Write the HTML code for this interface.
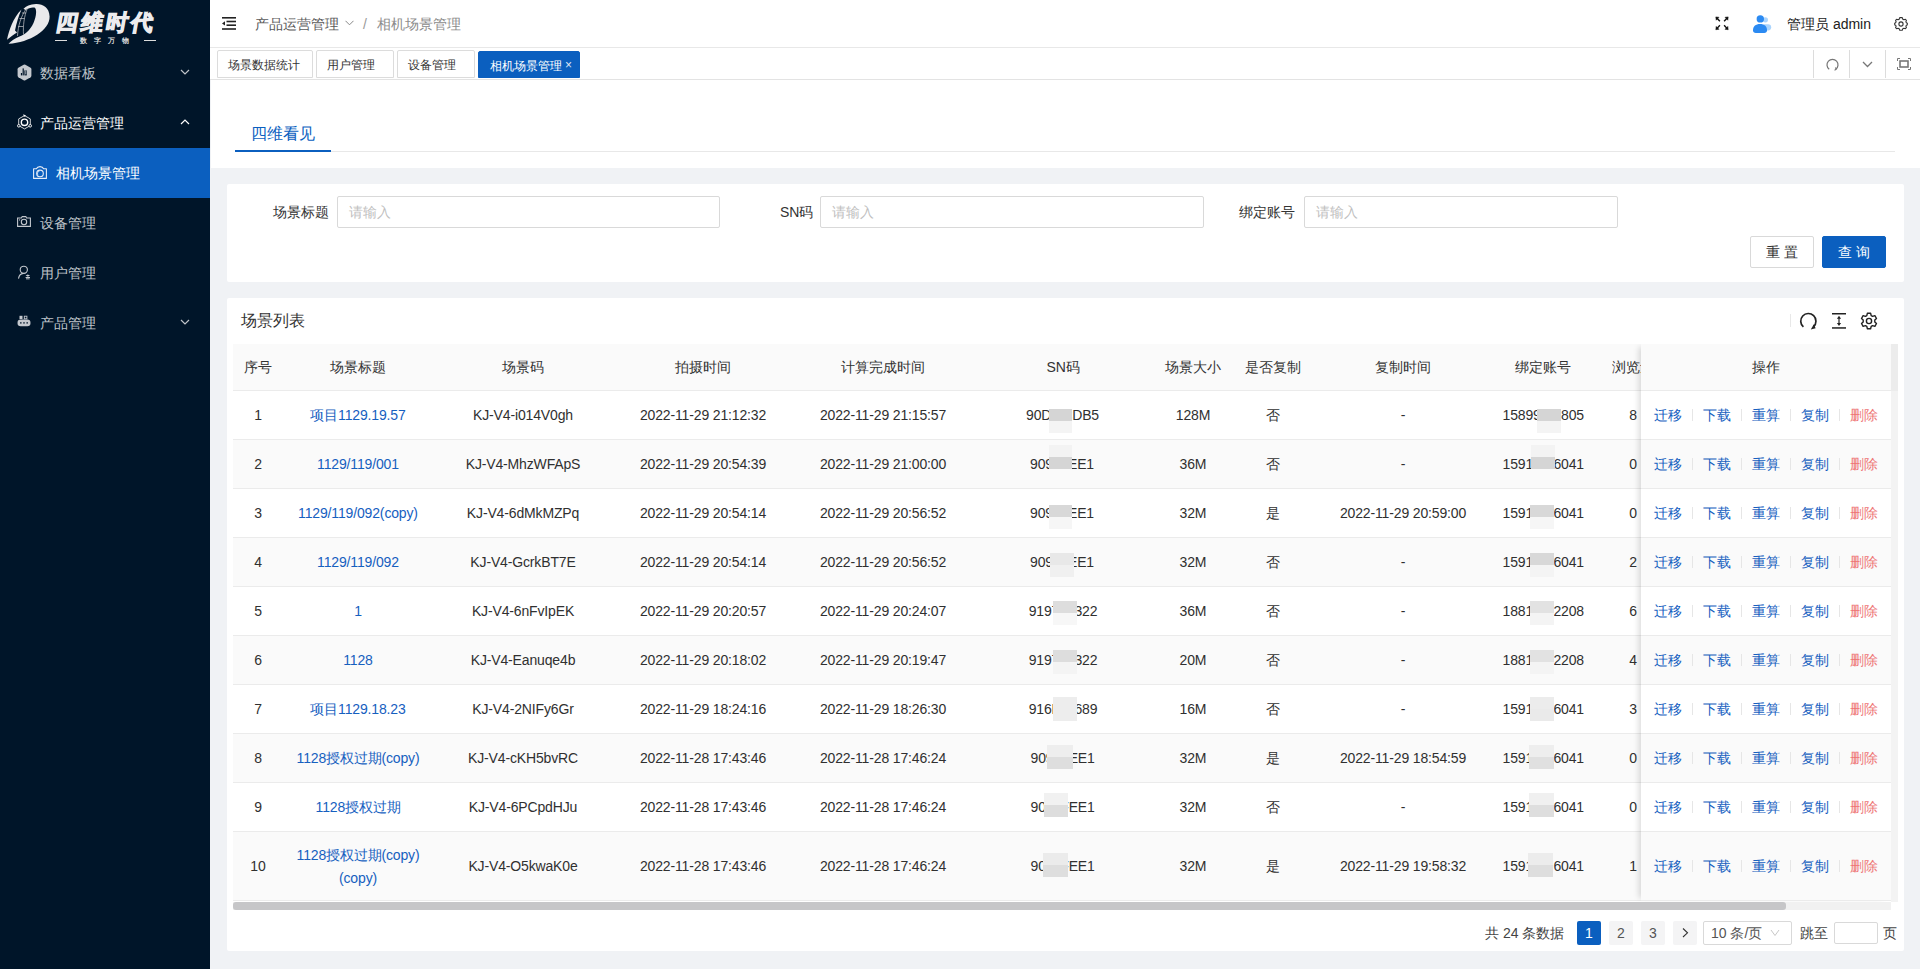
<!DOCTYPE html>
<html><head><meta charset="utf-8">
<style>
*{box-sizing:border-box;margin:0;padding:0}
html,body{width:1920px;height:969px;overflow:hidden;background:#f0f2f5;font-family:"Liberation Sans",sans-serif;color:#333;font-size:14px}
.abs{position:absolute}
.sider{position:absolute;left:0;top:0;width:210px;height:969px;background:#001529}
.menu{position:absolute;left:0;width:210px;height:50px;color:#bfc4ca;font-size:14px}
.menu .ic{position:absolute;left:17px;top:16px;width:15px;height:17px}
.menu .tx{position:absolute;left:40px;top:0;line-height:50px;white-space:nowrap}
.menu .ar{position:absolute;left:180px;top:21px;width:10px;height:6px}
.header{position:absolute;left:210px;top:0;width:1710px;height:48px;background:#fff;border-bottom:1px solid #e8e8e8}
.tabbar{position:absolute;left:210px;top:48px;width:1710px;height:32px;background:#fff;border-bottom:1px solid #e3e3e3}
.tab{position:absolute;top:2px;height:28px;border:1px solid #dcdcdc;border-radius:2px 2px 0 0;font-size:12px;line-height:28px;color:#333;text-align:left;padding-left:10px;white-space:nowrap;background:#fff}
.tab.on{background:#0b5fbf;border-color:#0b5fbf;color:#fff;top:3px;height:27px;line-height:27px;padding-top:1px}
.sep{position:absolute;top:2px;width:1px;height:28px;background:#dcdcdc}
.card{position:absolute;background:#fff;border-radius:2px}
.lbl{position:absolute;top:196px;line-height:32px;font-size:14px;color:#333;white-space:nowrap}
.inp{position:absolute;top:196px;height:32px;border:1px solid #d9d9d9;border-radius:2px;background:#fff;color:#bfbfbf;font-size:14px;line-height:30px;padding-left:11px}
.btn{position:absolute;top:236px;height:32px;border-radius:2px;font-size:14px;line-height:30px;text-align:center;letter-spacing:4px;text-indent:4px}

.tbl{position:absolute;left:233px;top:344px;width:1665px;height:568px;overflow:hidden;font-size:14px;color:#303030}
.tbl .c{position:absolute;top:0;text-align:center;white-space:nowrap;letter-spacing:-0.15px}
.th{position:absolute;left:0;width:1658px;background:#fafafa;border-bottom:1px solid #ebebeb;color:#333}
.tr{position:absolute;left:0;width:1658px;background:#fff;border-bottom:1px solid #ebebeb}
.ev{background:#fafafa}
.lk{color:#1660bf}
.mk{position:absolute;height:24px;z-index:1}
.fx{position:absolute;left:1408px;top:0;width:250px;height:557px;box-shadow:-5px 0 6px -3px rgba(0,0,0,.15)}
.fxh{position:absolute;left:0;top:0;width:250px;height:47px;background:#fafafa;border-bottom:1px solid #ebebeb;line-height:46px;text-align:center}
.fr{position:absolute;left:0;width:250px;background:#fff;border-bottom:1px solid #ebebeb;text-align:center;white-space:nowrap}
.fr.ev{background:#fafafa}
.fr a{color:#1660bf;text-decoration:none}
.fr a.del{color:#ee7575}
.fr b{display:inline-block;width:1px;height:12px;background:#e6e6e6;margin:0 10px;vertical-align:-1px}
.gut{position:absolute;left:1658px;width:7px}
.hs{position:absolute;left:0;top:558px;width:1658px;height:8px;background:#f1f1f1}
.hs i{position:absolute;left:0;top:0;width:1553px;height:8px;background:#c6c6c8;border-radius:3px}
.pg{position:absolute;top:921px;height:24px;width:24px;background:#f4f4f5;border-radius:2px;text-align:center;line-height:24px;font-size:14px;color:#555}
</style></head><body>

<div class="sider">
  <!-- logo -->
  <svg class="abs" style="left:0;top:0" width="60" height="48" viewBox="0 0 60 48">
    <path d="M8.5 43.8 C30 42.5 50 30 49.6 16.5 C49.3 7.5 43 3.8 36 4 C30 4.2 26 6.5 23.5 8.8 L25.5 10 C28.5 8 32 7 34.5 7.6 C37 9 36.6 16 33.5 23 C30 30.5 24.5 35 19.5 36.5 C15 38.2 11 41 8.5 43.8 Z" fill="#e9e9eb"/>
    <path d="M7 39.8 C9 30 13 18 21.5 9.5 C18.5 16 16.5 23 15 30.5 L17 32.5 C14 34.5 10.5 37 7 39.8 Z" fill="#e9e9eb"/>
    <path d="M17.5 36 C18 26 21 16 26.5 8.5 M23.5 34.5 C23 26 24 16 27.5 8.2" stroke="#c9c9cc" stroke-width="0.7" fill="none"/>
    <path d="M18.2 26.5 H23 M19.5 18.5 H24.5 M22 13 H26" stroke="#c9c9cc" stroke-width="0.7"/>
  </svg>
  <div class="abs" style="left:56px;top:8px;font-size:22px;line-height:30px;font-weight:900;color:#ececee;letter-spacing:3px;transform:skewX(-10deg);-webkit-text-stroke:1.2px #ececee;white-space:nowrap">四维时代</div>
  <div class="abs" style="left:55px;top:40px;width:12px;height:1px;background:#ddd"></div>
  <div class="abs" style="left:144px;top:40px;width:12px;height:1px;background:#ddd"></div>
  <div class="abs" style="left:80px;top:36px;font-size:7px;line-height:9px;color:#ddd;letter-spacing:7px;font-weight:bold;white-space:nowrap">数字万物</div>

  <div class="menu" style="top:48px"><svg class="ic" viewBox="0 0 15 17"><path d="M6.6 0.8 Q7.5 0.3 8.4 0.8 L13.6 3.8 Q14.4 4.3 14.4 5.2 V11.8 Q14.4 12.7 13.6 13.2 L8.4 16.2 Q7.5 16.7 6.6 16.2 L1.4 13.2 Q0.6 12.7 0.6 11.8 V5.2 Q0.6 4.3 1.4 3.8 Z" fill="#c4c8ce"/><rect x="3.9" y="9" width="1.2" height="2.4" fill="#001529"/><rect x="5.6" y="4.4" width="1.2" height="7" fill="#001529"/><rect x="7.4" y="6.4" width="2.4" height="5" fill="#001529"/><rect x="8.4" y="6.4" width="0.8" height="4" fill="#c4c8ce"/></svg><span class="tx">数据看板</span><svg class="ar" viewBox="0 0 10 6"><path d="M1 1 L5 5 L9 1" stroke="#bfc4ca" stroke-width="1.2" fill="none"/></svg></div>
  <div class="menu" style="top:98px;color:#fff"><svg class="ic" viewBox="0 0 15 17"><path d="M7.5 1.6 L13.3 4.9 V11.6 L7.5 14.9 L1.7 11.6 V4.9 Z" stroke="#e6e6e6" stroke-width="0.9" fill="none"/><circle cx="7.5" cy="8.3" r="3.2" stroke="#fff" stroke-width="1.4" fill="none"/><circle cx="1.8" cy="11.8" r="1.3" stroke="#fff" stroke-width="0.9" fill="#001529"/><circle cx="13.2" cy="11.8" r="1.3" stroke="#fff" stroke-width="0.9" fill="#001529"/><path d="M6.2 0.3 L9 1.6 L7 3 Z" fill="#fff"/></svg><span class="tx">产品运营管理</span><svg class="ar" viewBox="0 0 10 6"><path d="M1 5 L5 1 L9 5" stroke="#fff" stroke-width="1.2" fill="none"/></svg></div>
  <div class="menu" style="top:148px;background:#0b5fbf;color:#fff"><svg class="ic" style="left:33px;top:18px;width:14px;height:13px" viewBox="0 0 14 13"><path d="M0.6 2.8 H3.4 Q4.3 0.6 7 0.6 Q9.7 0.6 10.6 2.8 H13.4 V12.4 H0.6 Z" stroke="#e8eef8" stroke-width="1.1" fill="none" stroke-linejoin="round"/><circle cx="7" cy="7.4" r="3.3" stroke="#e8eef8" stroke-width="1.1" fill="none"/><path d="M5.2 9.2 A2.2 2.2 0 0 1 6.4 5.3" stroke="#e8eef8" stroke-width="0.8" fill="none"/></svg><span class="tx" style="left:56px">相机场景管理</span></div>
  <div class="menu" style="top:198px"><svg class="ic" style="top:18px;width:14px;height:11px" viewBox="0 0 14 11"><path d="M0.6 2 H4.4 L5.2 0.6 H8.8 L9.6 2 H13.4 V10.4 H0.6 Z" stroke="#c4c8ce" stroke-width="1.1" fill="none"/><circle cx="7" cy="6" r="2.7" stroke="#c4c8ce" stroke-width="1.1" fill="none"/><circle cx="2.6" cy="3.9" r="0.6" fill="#c4c8ce"/></svg><span class="tx">设备管理</span></div>
  <div class="menu" style="top:248px"><svg class="ic" style="left:18px;top:17px;width:13px;height:15px" viewBox="0 0 13 15"><circle cx="5.8" cy="4.8" r="3.6" stroke="#c4c8ce" stroke-width="1.1" fill="none"/><path d="M0.5 13.6 C1 10.6 3.2 8.6 5.4 8.4" stroke="#c4c8ce" stroke-width="1.1" fill="none"/><path d="M9.8 9.4 L12 10.6 L9.8 11.8 L7.6 10.6 Z" fill="#c4c8ce"/><rect x="7.6" y="12" width="4.4" height="1" fill="#c4c8ce"/><rect x="8" y="13.4" width="3.6" height="0.9" fill="#c4c8ce"/></svg><span class="tx">用户管理</span></div>
  <div class="menu" style="top:298px"><svg class="ic" style="left:17px;top:17px;width:14px;height:12px" viewBox="0 0 14 12"><rect x="2.5" y="0.8" width="3" height="3.2" fill="#c4c8ce"/><rect x="7.3" y="1.2" width="2.6" height="2.6" stroke="#c4c8ce" stroke-width="0.9" fill="none"/><rect x="0.5" y="4.6" width="13" height="6.6" rx="3.2" fill="#c4c8ce"/><rect x="3" y="7.3" width="1.6" height="1.2" fill="#001529"/><rect x="6.2" y="7.3" width="1.6" height="1.2" fill="#001529"/><rect x="9.4" y="7.3" width="1.6" height="1.2" fill="#001529"/></svg><span class="tx">产品管理</span><svg class="ar" viewBox="0 0 10 6"><path d="M1 1 L5 5 L9 1" stroke="#bfc4ca" stroke-width="1.2" fill="none"/></svg></div>
</div>

<div class="header">
  <svg class="abs" style="left:12px;top:17px" width="15" height="13" viewBox="0 0 15 13"><rect x="0" y="0" width="14" height="1.6" fill="#222"/><rect x="4.5" y="3.7" width="9.5" height="1.6" fill="#222"/><rect x="4.5" y="7.4" width="9.5" height="1.6" fill="#222"/><rect x="0" y="11.2" width="14" height="1.6" fill="#222"/><path d="M0 6.4 L3 4.2 V8.6 Z" fill="#222"/></svg>
  <div class="abs" style="left:45px;top:0;line-height:49px;font-size:14px;color:#595959;white-space:nowrap">产品运营管理</div>
  <svg class="abs" style="left:135px;top:20px" width="9" height="6" viewBox="0 0 9 6"><path d="M0.5 0.8 L4.5 4.8 L8.5 0.8" stroke="#888" stroke-width="1" fill="none"/></svg>
  <div class="abs" style="left:153px;top:0;line-height:49px;font-size:14px;color:#999">/</div>
  <div class="abs" style="left:167px;top:0;line-height:49px;font-size:14px;color:#8c8c8c;white-space:nowrap">相机场景管理</div>

  <svg class="abs" style="left:1504px;top:15px" width="16" height="16" viewBox="0 0 16 16" fill="#111" stroke="#111" stroke-width="1.4"><path d="M2.8 3 L5.9 6.3 M13.2 3 L10.1 6.3 M2.8 13.6 L5.9 10.2 M13.2 13.6 L10.1 10.2"/><path d="M1.8 1.9 L5 2.3 L2.2 5.2 Z M14.2 1.9 L11 2.3 L13.8 5.2 Z M1.8 14.7 L5 14.3 L2.2 11.4 Z M14.2 14.7 L11 14.3 L13.8 11.4 Z" stroke-width="0.5"/></svg>
  <svg class="abs" style="left:1542px;top:14px" width="20" height="20" viewBox="0 0 20 20"><rect x="9" y="10.2" width="10.2" height="6.2" rx="3.1" fill="#aad4fd"/><circle cx="13.4" cy="5.8" r="2.6" fill="#aad4fd"/><circle cx="8.3" cy="4.9" r="3.7" fill="#2b8af2"/><path d="M1 16.2 C1 12.2 3.8 10 8 10 C12.2 10 15 12.2 15 16.2 C15 18 14 19 12.2 19 H3.8 C2 19 1 18 1 16.2 Z" fill="#2b8af2"/></svg>
  <div class="abs" style="left:1577px;top:0;line-height:49px;font-size:14px;color:#222;white-space:nowrap">管理员 admin</div>
  <svg class="abs" style="left:1684px;top:17px" width="14" height="14" viewBox="0 0 16 16"><path d="M8 1.2 L9.6 1.6 L10 3.3 L11.4 4 L13 3.4 L14.2 4.6 L13.6 6.2 L14.3 7.6 L15.9 8 L15.9 9.6 L14.3 10 L13.6 11.4 L14.2 13 L13 14.2 L11.4 13.6 L10 14.3 L9.6 15.9 L6.4 15.9 L6 14.3 L4.6 13.6 L3 14.2 L1.8 13 L2.4 11.4 L1.7 10 L0.1 9.6 L0.1 8 L1.7 7.6 L2.4 6.2 L1.8 4.6 L3 3.4 L4.6 4 L6 3.3 L6.4 1.6 Z" transform="translate(0,-0.8)" stroke="#333" stroke-width="1.25" fill="none" stroke-linejoin="round"/><circle cx="8" cy="8" r="2.4" stroke="#333" stroke-width="1.25" fill="none"/></svg>
</div>

<div class="tabbar">
  <div class="tab" style="left:7px;width:96px">场景数据统计</div>
  <div class="tab" style="left:106px;width:78px">用户管理</div>
  <div class="tab" style="left:187px;width:78px">设备管理</div>
  <div class="tab on" style="left:268px;width:102px;padding-left:11px">相机场景管理<span class="abs" style="left:86px;top:0;font-size:12px;color:#dfe8f5">×</span></div>
  <div class="sep" style="left:1603px"></div>
  <div class="sep" style="left:1639px"></div>
  <div class="sep" style="left:1675px"></div>
  <svg class="abs" style="left:1616px;top:10px" width="13" height="13" viewBox="0 0 13 13"><path d="M3.2 11.3 A5.5 5.5 0 1 1 9.8 11.3" stroke="#777" stroke-width="1.2" fill="none"/><path d="M8.6 12.4 L10.2 11 L9.4 9.4" stroke="#777" stroke-width="1.1" fill="none"/></svg>
  <svg class="abs" style="left:1652px;top:13px" width="11" height="7" viewBox="0 0 11 7"><path d="M1 1 L5.5 5.5 L10 1" stroke="#777" stroke-width="1.3" fill="none"/></svg>
  <svg class="abs" style="left:1687px;top:10px" width="14" height="12" viewBox="0 0 14 12" stroke="#777" fill="none"><path d="M0.5 3 V0.5 H3 M11 0.5 H13.5 V3 M13.5 9 V11.5 H11 M3 11.5 H0.5 V9" stroke-width="1"/><rect x="3" y="3" width="8" height="6" stroke-width="1.6"/></svg>
</div>

<!-- top white area -->
<div class="abs" style="left:211px;top:80px;width:1709px;height:88px;background:#fff"></div>
<div class="abs" style="left:251px;top:121px;font-size:16px;line-height:26px;color:#0b5fbf">四维看见</div>
<div class="abs" style="left:235px;top:151px;width:1660px;height:1px;background:#e8e8e8"></div>
<div class="abs" style="left:235px;top:150px;width:96px;height:2px;background:#0b5fbf"></div>

<!-- search card -->
<div class="card" style="left:227px;top:184px;width:1677px;height:98px"></div>
<div class="lbl" style="left:273px">场景标题</div>
<div class="inp" style="left:337px;width:383px">请输入</div>
<div class="lbl" style="left:780px">SN码</div>
<div class="inp" style="left:820px;width:384px">请输入</div>
<div class="lbl" style="left:1239px">绑定账号</div>
<div class="inp" style="left:1304px;width:314px">请输入</div>
<div class="btn" style="left:1750px;width:64px;border:1px solid #d9d9d9;background:#fff;color:#333">重置</div>
<div class="btn" style="left:1822px;width:64px;border:1px solid #0b5fbf;background:#0b5fbf;color:#fff">查询</div>

<!-- table card -->
<div class="card" style="left:227px;top:298px;width:1677px;height:653px"></div>
<div class="abs" style="left:241px;top:309px;font-size:16px;line-height:24px;color:#333">场景列表</div>

<div class="tbl">
<div class="th" style="top:0;height:47px">
<div class="c" style="left:0px;width:50px;line-height:46px">序号</div>
<div class="c" style="left:50px;width:150px;line-height:46px">场景标题</div>
<div class="c" style="left:200px;width:180px;line-height:46px">场景码</div>
<div class="c" style="left:380px;width:180px;line-height:46px">拍摄时间</div>
<div class="c" style="left:560px;width:180px;line-height:46px">计算完成时间</div>
<div class="c" style="left:740px;width:180px;line-height:46px">SN码</div>
<div class="c" style="left:920px;width:80px;line-height:46px">场景大小</div>
<div class="c" style="left:1000px;width:80px;line-height:46px">是否复制</div>
<div class="c" style="left:1080px;width:180px;line-height:46px">复制时间</div>
<div class="c" style="left:1260px;width:100px;line-height:46px">绑定账号</div>
<div class="c" style="left:1360px;width:80px;line-height:46px">浏览量</div>
</div>
<div class="tr" style="top:47px;height:49px">
<div class="c" style="left:0px;width:50px;line-height:48px">1</div>
<div class="c lk" style="left:50px;width:150px;line-height:48px">项目1129.19.57</div>
<div class="c" style="left:200px;width:180px;line-height:48px">KJ-V4-i014V0gh</div>
<div class="c" style="left:380px;width:180px;line-height:48px">2022-11-29 21:12:32</div>
<div class="c" style="left:560px;width:180px;line-height:48px">2022-11-29 21:15:57</div>
<div class="c" style="left:793.0px;text-align:left;line-height:48px">90D</div><div class="c" style="left:746.0px;width:120px;text-align:right;line-height:48px">CDB5</div><i class="mk" style="left:816px;top:18px;width:23px;background:linear-gradient(#d5d5d5 50%,#f4f4f4 50%)"></i>
<div class="c" style="left:920px;width:80px;line-height:48px">128M</div>
<div class="c" style="left:1000px;width:80px;line-height:48px">否</div>
<div class="c" style="left:1080px;width:180px;line-height:48px">-</div>
<div class="c" style="left:1269.5px;text-align:left;line-height:48px">15899</div><div class="c" style="left:1231.0px;width:120px;text-align:right;line-height:48px">805</div><i class="mk" style="left:1304px;top:18px;width:24px;background:linear-gradient(#d5d5d5 50%,#f4f4f4 50%)"></i>
<div class="c" style="left:1360px;width:80px;line-height:48px">8</div>
</div>
<div class="tr ev" style="top:96px;height:49px">
<div class="c" style="left:0px;width:50px;line-height:48px">2</div>
<div class="c lk" style="left:50px;width:150px;line-height:48px">1129/119/001</div>
<div class="c" style="left:200px;width:180px;line-height:48px">KJ-V4-MhzWFApS</div>
<div class="c" style="left:380px;width:180px;line-height:48px">2022-11-29 20:54:39</div>
<div class="c" style="left:560px;width:180px;line-height:48px">2022-11-29 21:00:00</div>
<div class="c" style="left:797.0px;text-align:left;line-height:48px">909</div><div class="c" style="left:741.0px;width:120px;text-align:right;line-height:48px">FEE1</div><i class="mk" style="left:816px;top:5px;width:23px;background:linear-gradient(#f3f3f3 50%,#d5d5d5 50%)"></i>
<div class="c" style="left:920px;width:80px;line-height:48px">36M</div>
<div class="c" style="left:1000px;width:80px;line-height:48px">否</div>
<div class="c" style="left:1080px;width:180px;line-height:48px">-</div>
<div class="c" style="left:1269.5px;text-align:left;line-height:48px">1591</div><div class="c" style="left:1231.0px;width:120px;text-align:right;line-height:48px">6041</div><i class="mk" style="left:1298px;top:5px;width:24px;background:linear-gradient(#f3f3f3 50%,#d5d5d5 50%)"></i>
<div class="c" style="left:1360px;width:80px;line-height:48px">0</div>
</div>
<div class="tr" style="top:145px;height:49px">
<div class="c" style="left:0px;width:50px;line-height:48px">3</div>
<div class="c lk" style="left:50px;width:150px;line-height:48px">1129/119/092(copy)</div>
<div class="c" style="left:200px;width:180px;line-height:48px">KJ-V4-6dMkMZPq</div>
<div class="c" style="left:380px;width:180px;line-height:48px">2022-11-29 20:54:14</div>
<div class="c" style="left:560px;width:180px;line-height:48px">2022-11-29 20:56:52</div>
<div class="c" style="left:797.0px;text-align:left;line-height:48px">909</div><div class="c" style="left:741.0px;width:120px;text-align:right;line-height:48px">FEE1</div><i class="mk" style="left:816px;top:16px;width:23px;background:linear-gradient(#d8d8d8 50%,#f6f6f6 50%)"></i>
<div class="c" style="left:920px;width:80px;line-height:48px">32M</div>
<div class="c" style="left:1000px;width:80px;line-height:48px">是</div>
<div class="c" style="left:1080px;width:180px;line-height:48px">2022-11-29 20:59:00</div>
<div class="c" style="left:1269.5px;text-align:left;line-height:48px">1591</div><div class="c" style="left:1231.0px;width:120px;text-align:right;line-height:48px">6041</div><i class="mk" style="left:1297px;top:16px;width:24px;background:linear-gradient(#d8d8d8 50%,#f6f6f6 50%)"></i>
<div class="c" style="left:1360px;width:80px;line-height:48px">0</div>
</div>
<div class="tr ev" style="top:194px;height:49px">
<div class="c" style="left:0px;width:50px;line-height:48px">4</div>
<div class="c lk" style="left:50px;width:150px;line-height:48px">1129/119/092</div>
<div class="c" style="left:200px;width:180px;line-height:48px">KJ-V4-GcrkBT7E</div>
<div class="c" style="left:380px;width:180px;line-height:48px">2022-11-29 20:54:14</div>
<div class="c" style="left:560px;width:180px;line-height:48px">2022-11-29 20:56:52</div>
<div class="c" style="left:797.0px;text-align:left;line-height:48px">909</div><div class="c" style="left:741.0px;width:120px;text-align:right;line-height:48px">EE1</div><i class="mk" style="left:817px;top:15px;width:24px;background:linear-gradient(#e8e8e8 50%,#f0f0f0 50%)"></i>
<div class="c" style="left:920px;width:80px;line-height:48px">32M</div>
<div class="c" style="left:1000px;width:80px;line-height:48px">否</div>
<div class="c" style="left:1080px;width:180px;line-height:48px">-</div>
<div class="c" style="left:1269.5px;text-align:left;line-height:48px">1591</div><div class="c" style="left:1231.0px;width:120px;text-align:right;line-height:48px">6041</div><i class="mk" style="left:1297px;top:15px;width:24px;background:linear-gradient(#d8d8d8 50%,#f4f4f4 50%)"></i>
<div class="c" style="left:1360px;width:80px;line-height:48px">2</div>
</div>
<div class="tr" style="top:243px;height:49px">
<div class="c" style="left:0px;width:50px;line-height:48px">5</div>
<div class="c lk" style="left:50px;width:150px;line-height:48px">1</div>
<div class="c" style="left:200px;width:180px;line-height:48px">KJ-V4-6nFvIpEK</div>
<div class="c" style="left:380px;width:180px;line-height:48px">2022-11-29 20:20:57</div>
<div class="c" style="left:560px;width:180px;line-height:48px">2022-11-29 20:24:07</div>
<div class="c" style="left:795.7px;text-align:left;line-height:48px">9197</div><div class="c" style="left:744.4px;width:120px;text-align:right;line-height:48px">322</div><i class="mk" style="left:820px;top:14px;width:24px;background:linear-gradient(#dddddd 50%,#f7f7f7 50%)"></i>
<div class="c" style="left:920px;width:80px;line-height:48px">36M</div>
<div class="c" style="left:1000px;width:80px;line-height:48px">否</div>
<div class="c" style="left:1080px;width:180px;line-height:48px">-</div>
<div class="c" style="left:1269.5px;text-align:left;line-height:48px">1881</div><div class="c" style="left:1231.0px;width:120px;text-align:right;line-height:48px">2208</div><i class="mk" style="left:1297px;top:14px;width:24px;background:linear-gradient(#e2e2e2 50%,#f4f4f4 50%)"></i>
<div class="c" style="left:1360px;width:80px;line-height:48px">6</div>
</div>
<div class="tr ev" style="top:292px;height:49px">
<div class="c" style="left:0px;width:50px;line-height:48px">6</div>
<div class="c lk" style="left:50px;width:150px;line-height:48px">1128</div>
<div class="c" style="left:200px;width:180px;line-height:48px">KJ-V4-Eanuqe4b</div>
<div class="c" style="left:380px;width:180px;line-height:48px">2022-11-29 20:18:02</div>
<div class="c" style="left:560px;width:180px;line-height:48px">2022-11-29 20:19:47</div>
<div class="c" style="left:795.7px;text-align:left;line-height:48px">9197</div><div class="c" style="left:744.4px;width:120px;text-align:right;line-height:48px">322</div><i class="mk" style="left:820px;top:14px;width:24px;background:linear-gradient(#dddddd 50%,#f4f4f4 50%)"></i>
<div class="c" style="left:920px;width:80px;line-height:48px">20M</div>
<div class="c" style="left:1000px;width:80px;line-height:48px">否</div>
<div class="c" style="left:1080px;width:180px;line-height:48px">-</div>
<div class="c" style="left:1269.5px;text-align:left;line-height:48px">1881</div><div class="c" style="left:1231.0px;width:120px;text-align:right;line-height:48px">2208</div><i class="mk" style="left:1297px;top:14px;width:24px;background:linear-gradient(#e2e2e2 50%,#f4f4f4 50%)"></i>
<div class="c" style="left:1360px;width:80px;line-height:48px">4</div>
</div>
<div class="tr" style="top:341px;height:49px">
<div class="c" style="left:0px;width:50px;line-height:48px">7</div>
<div class="c lk" style="left:50px;width:150px;line-height:48px">项目1129.18.23</div>
<div class="c" style="left:200px;width:180px;line-height:48px">KJ-V4-2NIFy6Gr</div>
<div class="c" style="left:380px;width:180px;line-height:48px">2022-11-29 18:24:16</div>
<div class="c" style="left:560px;width:180px;line-height:48px">2022-11-29 18:26:30</div>
<div class="c" style="left:795.7px;text-align:left;line-height:48px">916B</div><div class="c" style="left:744.4px;width:120px;text-align:right;line-height:48px">689</div><i class="mk" style="left:820px;top:12px;width:24px;background:linear-gradient(#ededed 50%,#ededed 50%)"></i>
<div class="c" style="left:920px;width:80px;line-height:48px">16M</div>
<div class="c" style="left:1000px;width:80px;line-height:48px">否</div>
<div class="c" style="left:1080px;width:180px;line-height:48px">-</div>
<div class="c" style="left:1269.5px;text-align:left;line-height:48px">1591</div><div class="c" style="left:1231.0px;width:120px;text-align:right;line-height:48px">6041</div><i class="mk" style="left:1297px;top:12px;width:24px;background:linear-gradient(#ececec 50%,#eaeaea 50%)"></i>
<div class="c" style="left:1360px;width:80px;line-height:48px">3</div>
</div>
<div class="tr ev" style="top:390px;height:49px">
<div class="c" style="left:0px;width:50px;line-height:48px">8</div>
<div class="c lk" style="left:50px;width:150px;line-height:48px">1128授权过期(copy)</div>
<div class="c" style="left:200px;width:180px;line-height:48px">KJ-V4-cKH5bvRC</div>
<div class="c" style="left:380px;width:180px;line-height:48px">2022-11-28 17:43:46</div>
<div class="c" style="left:560px;width:180px;line-height:48px">2022-11-28 17:46:24</div>
<div class="c" style="left:797.5px;text-align:left;line-height:48px">909</div><div class="c" style="left:741.7px;width:120px;text-align:right;line-height:48px">FEE1</div><i class="mk" style="left:814px;top:11px;width:26px;background:linear-gradient(#eeeeee 50%,#dedede 50%)"></i>
<div class="c" style="left:920px;width:80px;line-height:48px">32M</div>
<div class="c" style="left:1000px;width:80px;line-height:48px">是</div>
<div class="c" style="left:1080px;width:180px;line-height:48px">2022-11-29 18:54:59</div>
<div class="c" style="left:1269.5px;text-align:left;line-height:48px">1591</div><div class="c" style="left:1231.0px;width:120px;text-align:right;line-height:48px">6041</div><i class="mk" style="left:1296px;top:11px;width:25px;background:linear-gradient(#eeeeee 50%,#e0e0e0 50%)"></i>
<div class="c" style="left:1360px;width:80px;line-height:48px">0</div>
</div>
<div class="tr" style="top:439px;height:49px">
<div class="c" style="left:0px;width:50px;line-height:48px">9</div>
<div class="c lk" style="left:50px;width:150px;line-height:48px">1128授权过期</div>
<div class="c" style="left:200px;width:180px;line-height:48px">KJ-V4-6PCpdHJu</div>
<div class="c" style="left:380px;width:180px;line-height:48px">2022-11-28 17:43:46</div>
<div class="c" style="left:560px;width:180px;line-height:48px">2022-11-28 17:46:24</div>
<div class="c" style="left:797.5px;text-align:left;line-height:48px">90</div><div class="c" style="left:741.7px;width:120px;text-align:right;line-height:48px">FEE1</div><i class="mk" style="left:811px;top:10px;width:24px;background:linear-gradient(#f1f1f1 50%,#dddddd 50%)"></i>
<div class="c" style="left:920px;width:80px;line-height:48px">32M</div>
<div class="c" style="left:1000px;width:80px;line-height:48px">否</div>
<div class="c" style="left:1080px;width:180px;line-height:48px">-</div>
<div class="c" style="left:1269.5px;text-align:left;line-height:48px">1591</div><div class="c" style="left:1231.0px;width:120px;text-align:right;line-height:48px">6041</div><i class="mk" style="left:1296px;top:10px;width:25px;background:linear-gradient(#f0f0f0 50%,#dedede 50%)"></i>
<div class="c" style="left:1360px;width:80px;line-height:48px">0</div>
</div>
<div class="tr ev" style="top:488px;height:69px">
<div class="c" style="left:0px;width:50px;line-height:68px">10</div>
<div class="c lk" style="left:50px;width:150px;top:12px;line-height:23px">1128授权过期(copy)<br>(copy)</div>
<div class="c" style="left:200px;width:180px;line-height:68px">KJ-V4-O5kwaK0e</div>
<div class="c" style="left:380px;width:180px;line-height:68px">2022-11-28 17:43:46</div>
<div class="c" style="left:560px;width:180px;line-height:68px">2022-11-28 17:46:24</div>
<div class="c" style="left:797.5px;text-align:left;line-height:68px">90</div><div class="c" style="left:741.7px;width:120px;text-align:right;line-height:68px">FEE1</div><i class="mk" style="left:810px;top:21px;width:25px;background:linear-gradient(#ebebeb 50%,#dedede 50%)"></i>
<div class="c" style="left:920px;width:80px;line-height:68px">32M</div>
<div class="c" style="left:1000px;width:80px;line-height:68px">是</div>
<div class="c" style="left:1080px;width:180px;line-height:68px">2022-11-29 19:58:32</div>
<div class="c" style="left:1269.5px;text-align:left;line-height:68px">1591</div><div class="c" style="left:1231.0px;width:120px;text-align:right;line-height:68px">6041</div><i class="mk" style="left:1295px;top:21px;width:25px;background:linear-gradient(#ececec 50%,#dedede 50%)"></i>
<div class="c" style="left:1360px;width:80px;line-height:68px">1</div>
</div>
<div class="fx">
<div class="fxh">操作</div>
<div class="fr" style="top:47px;height:49px;line-height:48px"><a>迁移</a><b></b><a>下载</a><b></b><a>重算</a><b></b><a>复制</a><b></b><a class="del">删除</a></div>
<div class="fr ev" style="top:96px;height:49px;line-height:48px"><a>迁移</a><b></b><a>下载</a><b></b><a>重算</a><b></b><a>复制</a><b></b><a class="del">删除</a></div>
<div class="fr" style="top:145px;height:49px;line-height:48px"><a>迁移</a><b></b><a>下载</a><b></b><a>重算</a><b></b><a>复制</a><b></b><a class="del">删除</a></div>
<div class="fr ev" style="top:194px;height:49px;line-height:48px"><a>迁移</a><b></b><a>下载</a><b></b><a>重算</a><b></b><a>复制</a><b></b><a class="del">删除</a></div>
<div class="fr" style="top:243px;height:49px;line-height:48px"><a>迁移</a><b></b><a>下载</a><b></b><a>重算</a><b></b><a>复制</a><b></b><a class="del">删除</a></div>
<div class="fr ev" style="top:292px;height:49px;line-height:48px"><a>迁移</a><b></b><a>下载</a><b></b><a>重算</a><b></b><a>复制</a><b></b><a class="del">删除</a></div>
<div class="fr" style="top:341px;height:49px;line-height:48px"><a>迁移</a><b></b><a>下载</a><b></b><a>重算</a><b></b><a>复制</a><b></b><a class="del">删除</a></div>
<div class="fr ev" style="top:390px;height:49px;line-height:48px"><a>迁移</a><b></b><a>下载</a><b></b><a>重算</a><b></b><a>复制</a><b></b><a class="del">删除</a></div>
<div class="fr" style="top:439px;height:49px;line-height:48px"><a>迁移</a><b></b><a>下载</a><b></b><a>重算</a><b></b><a>复制</a><b></b><a class="del">删除</a></div>
<div class="fr ev" style="top:488px;height:69px;line-height:68px"><a>迁移</a><b></b><a>下载</a><b></b><a>重算</a><b></b><a>复制</a><b></b><a class="del">删除</a></div>
</div>
<div class="gut" style="top:0;height:47px;background:#ececec"></div>
<div class="gut" style="top:47px;height:511px;background:#f3f3f3"></div>
<div class="hs"><i></i></div>
</div>

<!-- toolbar icons -->
<div class="abs" style="left:1790px;top:314px;width:1px;height:13px;background:#e8e8e8"></div>
<svg class="abs" style="left:1799px;top:312px" width="19" height="19" viewBox="0 0 19 19"><path d="M4.4 14.9 A7.6 7.6 0 1 1 14.6 14.6" stroke="#222" stroke-width="1.7" fill="none"/><path d="M11.8 17.4 L16.6 16.2 L14.8 12.2 Z" fill="#222"/></svg>
<svg class="abs" style="left:1831px;top:312px" width="16" height="18" viewBox="0 0 16 18"><rect x="1" y="1" width="14" height="1.5" fill="#222"/><rect x="1" y="15.2" width="14" height="1.5" fill="#222"/><path d="M8 6 V12.5" stroke="#222" stroke-width="1.2"/><path d="M8 3.8 L10.1 6.8 H5.9 Z M8 14 L10.1 11 H5.9 Z" fill="#222"/></svg>
<svg class="abs" style="left:1860px;top:312px" width="18" height="18" viewBox="0 0 18 18"><path d="M7.4 1.3 H10.6 L11.2 3.6 L12.6 4.4 L14.9 3.7 L16.5 6.5 L14.8 8.1 V9.9 L16.5 11.5 L14.9 14.3 L12.6 13.6 L11.2 14.4 L10.6 16.7 H7.4 L6.8 14.4 L5.4 13.6 L3.1 14.3 L1.5 11.5 L3.2 9.9 V8.1 L1.5 6.5 L3.1 3.7 L5.4 4.4 L6.8 3.6 Z" stroke="#222" stroke-width="1.4" fill="none" stroke-linejoin="round"/><circle cx="9" cy="9" r="2.6" stroke="#222" stroke-width="1.4" fill="none"/></svg>

<!-- pagination -->
<div class="abs" style="left:1485px;top:921px;line-height:24px;font-size:14px;color:#444;white-space:nowrap">共 24 条数据</div>
<div class="pg" style="left:1577px;background:#0b5fbf;color:#fff">1</div>
<div class="pg" style="left:1609px">2</div>
<div class="pg" style="left:1641px">3</div>
<div class="pg" style="left:1673px"><svg width="8" height="12" viewBox="0 0 8 12" style="margin-top:6px"><path d="M2 1.5 L6.5 5.8 L2 10" stroke="#333" stroke-width="1.1" fill="none"/></svg></div>
<div class="abs" style="left:1703px;top:921px;width:89px;height:24px;border:1px solid #d9d9d9;border-radius:2px;line-height:22px;font-size:14px;color:#555;padding-left:7px;white-space:nowrap">10 条/页<svg class="abs" style="left:66px;top:7px" width="10" height="8" viewBox="0 0 10 8"><path d="M1 1 L5 6.5 L9 1" stroke="#c8c8c8" stroke-width="1" fill="none"/></svg></div>
<div class="abs" style="left:1800px;top:921px;line-height:24px;font-size:14px;color:#444">跳至</div>
<div class="abs" style="left:1834px;top:922px;width:44px;height:22px;border:1px solid #d9d9d9;border-radius:2px"></div>
<div class="abs" style="left:1883px;top:921px;line-height:24px;font-size:14px;color:#444">页</div>
</body></html>
